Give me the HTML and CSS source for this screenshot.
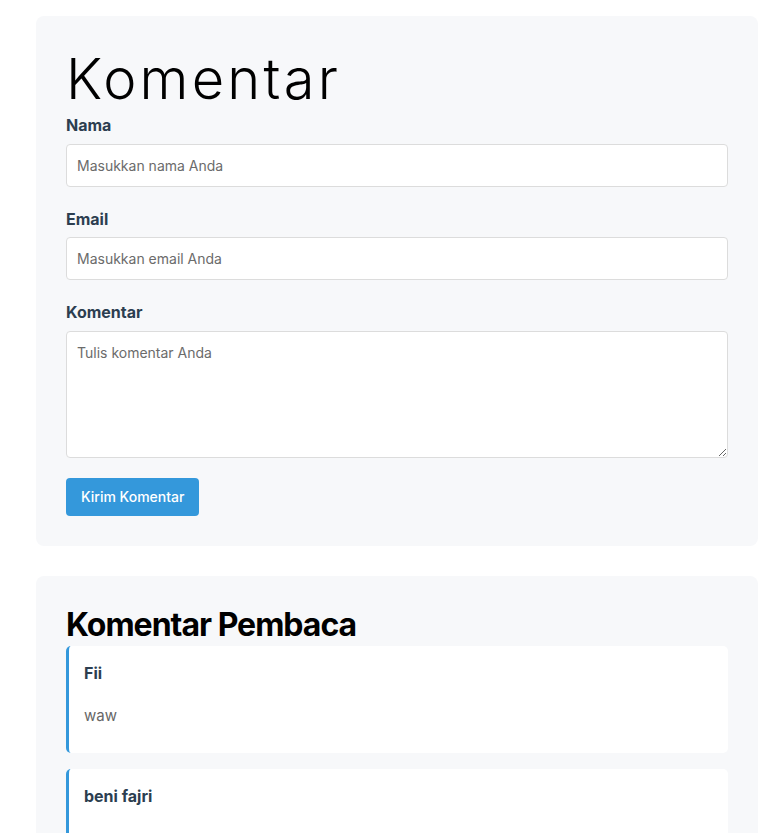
FILE: index.html
```html
<!DOCTYPE html>
<html lang="id">
<head>
<meta charset="utf-8">
<title>Komentar</title>
<link rel="stylesheet" href="styles.css">
</head>
<body>
<main class="page">
  <section class="card">
    <h1 class="title">Komentar</h1>
    <form class="form">
      <div class="group">
        <label class="label" for="nama">Nama</label>
        <input class="input" id="nama" type="text" placeholder="Masukkan nama Anda">
      </div>
      <div class="group">
        <label class="label" for="email">Email</label>
        <input class="input" id="email" type="email" placeholder="Masukkan email Anda">
      </div>
      <div class="group">
        <label class="label" for="komentar">Komentar</label>
        <textarea class="input textarea" id="komentar" placeholder="Tulis komentar Anda"></textarea>
      </div>
      <button class="button" type="button">Kirim Komentar</button>
    </form>
  </section>

  <section class="card">
    <h2 class="subtitle">Komentar Pembaca</h2>
    <div class="list">
      <article class="comment">
        <h4 class="comment-name">Fii</h4>
        <p class="comment-text">waw</p>
      </article>
      <article class="comment">
        <h4 class="comment-name">beni fajri</h4>
      </article>
    </div>
  </section>
</main>
</body>
</html>
```
FILE: styles.css
```css
* { box-sizing: border-box; }

html, body {
  margin: 0;
  padding: 0;
  background: #ffffff;
}

body {
  font-family: Inter, "Liberation Sans", sans-serif;
  line-height: 1.6;
  color: #333;
}

.page {
  padding: 16px 26px 0 36px;
  display: flex;
  flex-direction: column;
  gap: 30px;
}

.card {
  background: #f7f8fa;
  border-radius: 8px;
  padding: 30px;
}

.title {
  margin: 0;
  font-family: Inter, sans-serif;
  font-weight: 300;
  font-size: 56px;
  line-height: 1.2;
  letter-spacing: 3.2px;
  color: #000;
}

.group {
  margin-bottom: 20px;
}

.label {
  display: block;
  font-weight: 700;
  font-size: 16px;
  line-height: 25.6px;
  color: #2c3e50;
  margin-bottom: 5px;
}

.input {
  display: block;
  width: 100%;
  font-family: Inter, sans-serif;
  font-size: 14px;
  line-height: 17px;
  padding: 12px 10px;
  border: 1px solid #dcdcdc;
  border-radius: 4px;
  background: #fff;
  color: #333;
}

.input::placeholder {
  color: #6b6b6b;
}

.textarea {
  height: 127px;
  resize: vertical;
}

.button {
  font-family: Inter, sans-serif;
  font-size: 14px;
  font-weight: 500;
  line-height: 18px;
  padding: 10px 15px;
  border: 0;
  border-radius: 4px;
  background: #3498db;
  color: #fff;
  cursor: pointer;
}

.subtitle {
  margin: 0 0 2px;
  font-family: Inter, sans-serif;
  font-weight: 700;
  font-size: 32px;
  line-height: 1.2;
  letter-spacing: -1px;
  color: #000;
}

.list {
  display: flex;
  flex-direction: column;
  gap: 16px;
}

.comment {
  background: #fff;
  border-left: 3px solid #3498db;
  border-radius: 5px;
  padding: 15px;
}

.comment-name {
  margin: 0 0 17px;
  font-size: 16px;
  font-weight: 700;
  line-height: 25.6px;
  color: #2c3e50;
}

.comment-text {
  margin: 0 0 10px;
  font-size: 15px;
  line-height: 24px;
  color: #666;
}
```
